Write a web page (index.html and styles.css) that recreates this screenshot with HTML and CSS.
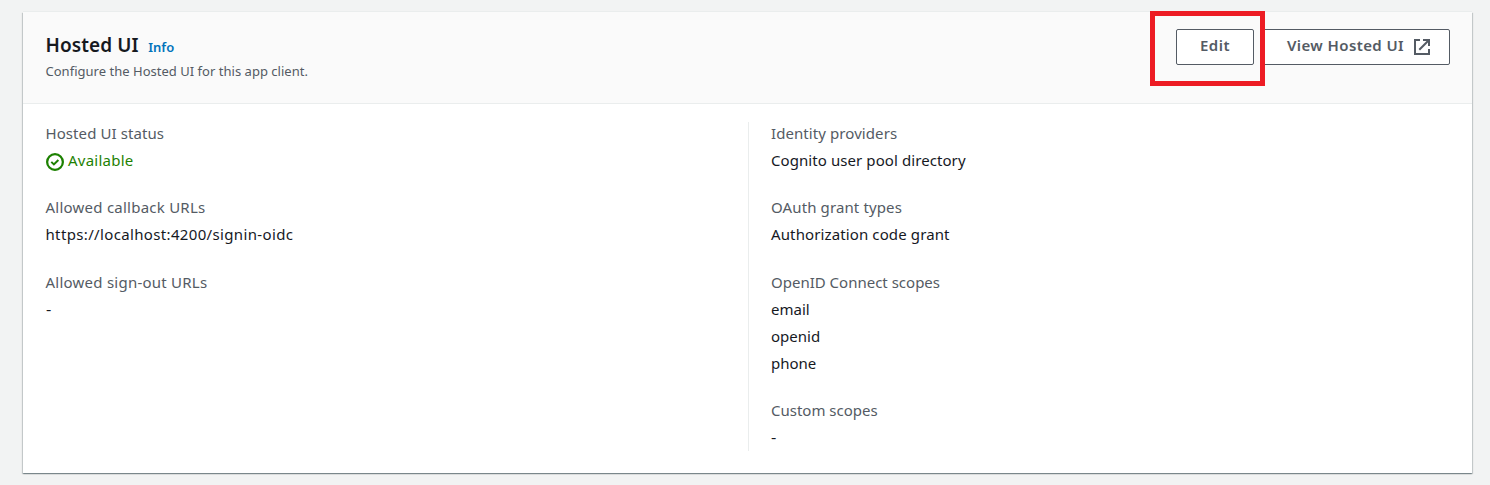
FILE: index.html
```
<!DOCTYPE html>
<html lang="en">
<head>
<meta charset="utf-8">
<title>Hosted UI</title>
<link rel="stylesheet" href="styles.css">
</head>
<body>
<section class="card">
  <header class="card-header">
    <div class="heading">
      <div class="title-row"><h2 class="title">Hosted UI</h2><a class="info">Info</a></div>
      <p class="description">Configure the Hosted UI for this app client.</p>
    </div>
    <div class="actions">
      <div class="edit-wrap"><button class="button edit">Edit</button><span class="highlight"></span></div>
      <button class="button view"><span>View Hosted UI</span>
        <svg class="external" viewBox="0 0 18 18" fill="none" stroke="currentColor" stroke-width="2"><path d="M10 2h6v6M6.3 11.7L16 2M16 11v5H2V2h5"/></svg>
      </button>
    </div>
  </header>
  <div class="card-body">
    <div class="column">
      <dl class="field"><dt class="w-status">Hosted UI status</dt><dd class="status"><svg class="check" viewBox="0 0 16 16" fill="none" stroke="currentColor"><circle cx="8" cy="8" r="7" stroke-width="2"/><path d="M4.7 7.9l2.3 2.2 4-3.9" stroke-width="1.8"/></svg><span class="w-available">Available</span></dd></dl>
      <dl class="field"><dt class="w-callback">Allowed callback URLs</dt><dd class="w-url">https://localhost:4200/signin-oidc</dd></dl>
      <dl class="field"><dt class="w-callback">Allowed sign-out URLs</dt><dd class="none">-</dd></dl>
    </div>
    <div class="column column-right">
      <dl class="field"><dt class="w-status">Identity providers</dt><dd class="w-status">Cognito user pool directory</dd></dl>
      <dl class="field"><dt class="w-code">OAuth grant types</dt><dd class="w-code">Authorization code grant</dd></dl>
      <dl class="field"><dt>OpenID Connect scopes</dt><dd>email</dd><dd>openid</dd><dd>phone</dd></dl>
      <dl class="field"><dt>Custom scopes</dt><dd class="none">-</dd></dl>
    </div>
  </div>
</section>
</body>
</html>
```
FILE: styles.css
```
* { box-sizing: border-box; }
body { margin: 0; padding: 12px 18px 0 23px; height: 485px; overflow: hidden; background: #f2f3f3; color: #16191f; font-family: "Noto Sans", "Open Sans", sans-serif; font-size: 15px; line-height: 24.75px; }
h2, p, dl, dd { margin: 0; }
.card { width: 1449px; height: 461px; background: #fff; box-shadow: 0 1px 1px 0 rgba(0,28,36,.3), 1px 1px 1px 0 rgba(0,28,36,.15), -1px 1px 1px 0 rgba(0,28,36,.15), 0 -1px 0 #eaeded; }
.card-header { display: flex; justify-content: space-between; height: 92px; padding: 17px 22px 0 22.5px; background: #fafafa; border-bottom: 1px solid #eaeded; }
.heading { padding-top: 1px; }
.title-row { display: flex; align-items: baseline; gap: 9.5px; height: 30px; }
.title { font-size: 19px; line-height: 31px; font-weight: 600; letter-spacing: .1px; }
.info { color: #0073bb; font-size: 13px; font-weight: 600; }
.description { font-size: 13px; line-height: 22px; letter-spacing: .02px; color: #545b64; }
.actions { display: flex; gap: 9px; align-items: flex-start; }
.edit-wrap { position: relative; }
.button { display: flex; align-items: center; height: 36px; padding: 0 0 4px; justify-content: center; border: 1px solid #545b64; border-radius: 2px; background: #fff; color: #545b64; font: 600 15px "Noto Sans", "Open Sans", sans-serif; }
.edit { width: 78px; letter-spacing: .5px; }
.view { width: 187px; gap: 9px; padding-left: 5px; letter-spacing: .4px; }
.external { width: 18px; height: 18px; margin-top: 4px; }
.highlight { position: absolute; left: -26px; top: -18px; width: 115px; height: 75px; border: 5px solid #ed1c24; z-index: 1; }
.card-body { display: grid; grid-template-columns: 725px 1fr; padding: 18px 0 22.5px; }
.column { display: flex; flex-direction: column; gap: 22.5px; padding-left: 22.5px; height: 328.5px; }
.column-right { border-left: 1px solid #eaeded; padding-left: 22px; }
.field { display: grid; gap: 2.25px; justify-items: start; }
.field dt, .field dd { margin-top: -1px; margin-bottom: 1px; }
.field dt { color: #545b64; }
.status { display: flex; align-items: center; gap: 4.5px; color: #1d8102; }
.check { width: 18px; height: 18px; margin-top: 3px; }
.w-status { letter-spacing: .08px; }
.w-code { letter-spacing: .12px; }
.w-available, .w-callback { letter-spacing: .24px; }
.w-url { letter-spacing: .35px; }
.none { transform: scaleX(1.1); transform-origin: left; }
```
